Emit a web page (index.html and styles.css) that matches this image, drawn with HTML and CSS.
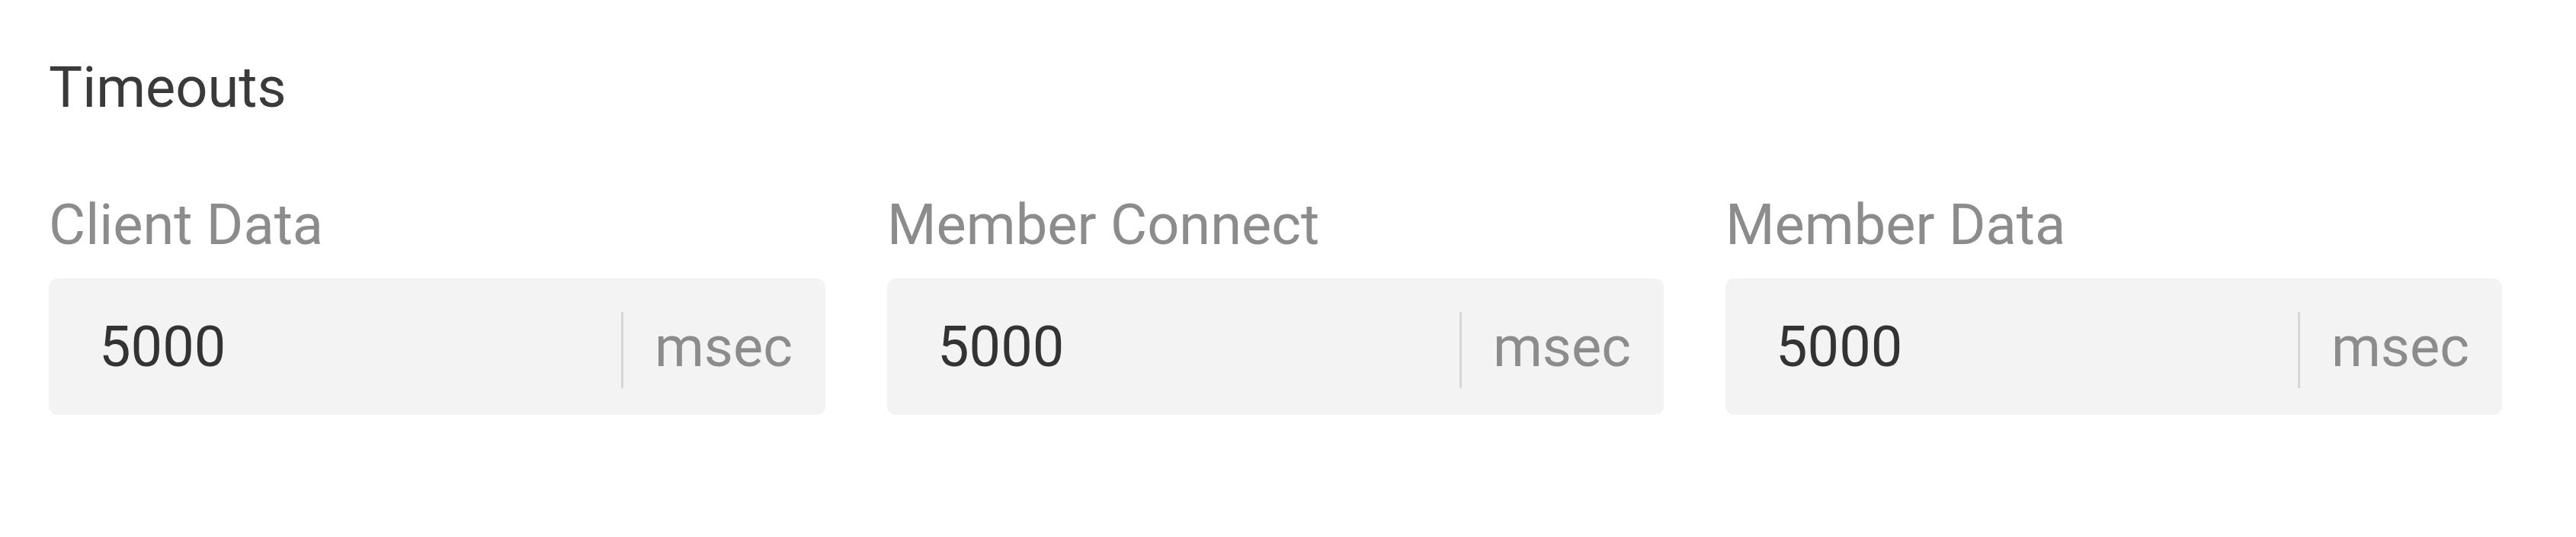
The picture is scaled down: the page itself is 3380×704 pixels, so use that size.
FILE: index.html
```html
<!DOCTYPE html>
<html lang="en">
<head>
    <meta charset="UTF-8">
    <meta name="viewport" content="width=device-width, initial-scale=1.0">
    <title>Timeouts</title>
    <link rel="stylesheet" href="styles.css">
</head>
<body>

<div class="panel">
    <h2 class="panel-title">Timeouts</h2>

    <div class="fields">
        <div class="field">
            <label for="clientData">Client Data</label>
            <div class="input-group">
                <input id="clientData" type="text" value="5000">
                <span class="divider"></span>
                <span class="unit">msec</span>
            </div>
        </div>
        <div class="field">
            <label for="memberConnect">Member Connect</label>
            <div class="input-group">
                <input id="memberConnect" type="text" value="5000">
                <span class="divider"></span>
                <span class="unit">msec</span>
            </div>
        </div>
        <div class="field">
            <label for="memberData">Member Data</label>
            <div class="input-group">
                <input id="memberData" type="text" value="5000">
                <span class="divider"></span>
                <span class="unit">msec</span>
            </div>
        </div>
    </div>
</div>

</body>
</html>
```

FILE: styles.css
```css
body {
    font-family: Roboto, "Noto Sans", sans-serif;
    background-color: #fff;
    margin: 0;
}
.panel {
    padding: 71px 97px 0 64px;
}
.panel-title {
    margin: 0;
    font-size: 74px;
    font-weight: 400;
    line-height: 88px;
    color: #3a3a3a;
}
.fields {
    display: grid;
    grid-template-columns: repeat(3, minmax(0, 1fr));
    gap: 81px;
    margin-top: 92px;
}
.field label {
    display: block;
    font-size: 74px;
    line-height: 88px;
    color: #8c8c8c;
    margin-bottom: 26px;
}
.input-group {
    display: flex;
    align-items: center;
    height: 179px;
    background: #f3f3f3;
    border-radius: 12px;
}
.input-group input {
    flex: 1;
    width: 0;
    min-width: 0;
    border: none;
    outline: none;
    background: transparent;
    padding: 0 0 0 66px;
    font-family: inherit;
    font-size: 74px;
    line-height: 88px;
    color: #333;
}
.divider {
    width: 3px;
    height: 100px;
    margin-top: 8px;
    background: #d6d6d6;
}
.unit {
    padding: 0 43px 0 41px;
    font-size: 74px;
    line-height: 88px;
    color: #8c8c8c;
}
```
